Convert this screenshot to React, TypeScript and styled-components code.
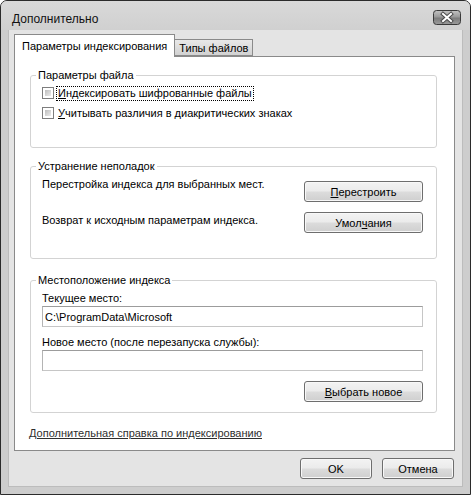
import React from 'react';
import styled, { createGlobalStyle } from 'styled-components';

const GlobalStyle = createGlobalStyle`
  html, body {
    margin: 0;
    padding: 0;
    background: #ffffff;
  }
  * {
    box-sizing: border-box;
  }
`;

const App: React.FC = () => {
  return (
    <>
      <GlobalStyle />
      <Window>
        <TitleBar>
          <Title>Дополнительно</Title>
          <CloseButton aria-label="Закрыть">
            <svg width="28" height="15" viewBox="0 0 28 15">
              <defs>
                <linearGradient id="closeFill" x1="0" y1="0" x2="0" y2="1">
                  <stop offset="0" stopColor="#c4c4c4" />
                  <stop offset="0.45" stopColor="#9a9a9a" />
                  <stop offset="0.55" stopColor="#7c7c7c" />
                  <stop offset="1" stopColor="#9c9c9c" />
                </linearGradient>
              </defs>
              <rect x="0.5" y="0.5" width="27" height="14" rx="3" fill="url(#closeFill)" stroke="#3a3a3a" />
              <path d="M10 4 L18 11 M18 4 L10 11" stroke="#4a4a4a" strokeWidth="4" strokeLinecap="square" />
              <path d="M10 4 L18 11 M18 4 L10 11" stroke="#ffffff" strokeWidth="2" strokeLinecap="square" />
            </svg>
          </CloseButton>
        </TitleBar>

        <Client>
          <TabStrip>
            <Tab active>Параметры индексирования</Tab>
            <Tab>Типы файлов</Tab>
          </TabStrip>

          <Panel>
            <Group>
              <Legend>Параметры файла</Legend>
              <CheckRow top={4}>
                <CheckBox />
                <CheckLabel focused>
                  <Mn>И</Mn>ндексировать шифрованные файлы
                </CheckLabel>
              </CheckRow>
              <CheckRow top={6}>
                <CheckBox />
                <CheckLabel>
                  <Mn>У</Mn>читывать различия в диакритических знаках
                </CheckLabel>
              </CheckRow>
            </Group>

            <Group gapTop={11} padBottom={25}>
              <Legend>Устранение неполадок</Legend>
              <ActionRow top={4}>
                <Text>Перестройка индекса для выбранных мест.</Text>
                <Button width={119} offset={4}>
                  <Mn>П</Mn>ерестроить
                </Button>
              </ActionRow>
              <ActionRow top={10}>
                <Text offset={1}>Возврат к исходным параметрам индекса.</Text>
                <Button width={119}>
                  Умол<Mn>ч</Mn>ания
                </Button>
              </ActionRow>
            </Group>

            <Group gapTop={14} padBottom={10}>
              <Legend>Местоположение индекса</Legend>
              <FieldLabel top={4}>Текущее место:</FieldLabel>
              <Input readOnly value="C:\ProgramData\Microsoft" />
              <FieldLabel top={8}>Новое место (после перезапуска службы):</FieldLabel>
              <Input readOnly value="" />
              <ButtonLine>
                <Button width={119}>
                  <Mn>В</Mn>ыбрать новое
                </Button>
              </ButtonLine>
            </Group>

            <HelpLink href="#">Дополнительная справка по индексированию</HelpLink>
          </Panel>

          <Footer>
            <Button width={72}>OK</Button>
            <Button width={72}>Отмена</Button>
          </Footer>
        </Client>
      </Window>
    </>
  );
};

export default App;

/* ----------------------- */
/* Styled Components       */
/* ----------------------- */

const uiFont = `'Liberation Sans', Arial, sans-serif`;

const Window = styled.div`
  width: 471px;
  height: 495px;
  border: 1px solid #2b2b2b;
  border-radius: 7px 7px 0 0;
  background: #cdcdcd;
  display: flex;
  flex-direction: column;
  font-family: ${uiFont};
  font-size: 11px;
  color: #000;
  overflow: hidden;
`;

const TitleBar = styled.div`
  height: 29px;
  display: flex;
  align-items: flex-start;
  justify-content: space-between;
  padding: 9px 9px 0 11px;
  background: linear-gradient(#d9d9d9, #d0d0d0);
`;

const Title = styled.span`
  font-size: 12px;
  line-height: 14px;
  color: #111;
  margin-top: 2px;
`;

const CloseButton = styled.div`
  width: 28px;
  height: 15px;
  display: flex;
`;

const Client = styled.div`
  width: 455px;
  height: 457px;
  margin: 0 7px;
  background: #e4e4e4;
  border: 1px solid #bcbcbc;
  border-top: none;
  display: flex;
  flex-direction: column;
  padding: 4px 7px 0 5px;
`;

const TabStrip = styled.div`
  display: flex;
  align-items: flex-end;
  margin-bottom: -1px;
  position: relative;
  z-index: 1;
`;

const Tab = styled.div<{ active?: boolean }>`
  border: 1px solid #8a8a8a;
  border-bottom: ${p => (p.active ? 'none' : '1px solid #8a8a8a')};
  height: ${p => (p.active ? '23px' : '17px')};
  margin-bottom: ${p => (p.active ? '0' : '1px')};
  margin-left: ${p => (p.active ? '0' : '-1px')};
  padding: ${p => (p.active ? '4px 7px 0 7px' : '0 4px 0 4px')};
  background: ${p => (p.active ? '#ffffff' : 'linear-gradient(#e8e8e8, #d2d2d2)')};
  line-height: 14px;
  font-size: 11px;
  white-space: nowrap;
  display: flex;
  align-items: ${p => (p.active ? 'flex-start' : 'center')};
`;

const Panel = styled.div`
  width: 441px;
  height: 395px;
  background: #ffffff;
  border: 1px solid #8a8a8a;
  padding: 11px 17px 0 15px;
  display: flex;
  flex-direction: column;
`;

const Group = styled.fieldset<{ gapTop?: number; padBottom?: number }>`
  margin: ${p => p.gapTop ?? 0}px 0 0 0;
  padding: 0 13px ${p => p.padBottom ?? 27}px 11px;
  border: 1px solid #d3d3d3;
  border-radius: 3px;
  min-width: 0;
`;

const Legend = styled.legend`
  margin-left: -6px;
  padding: 0 2px;
  line-height: 14px;
  font-size: 11px;
`;

const CheckRow = styled.div<{ top: number }>`
  display: flex;
  align-items: center;
  margin-top: ${p => p.top}px;
  height: 14px;
`;

const CheckBox = styled.span`
  width: 12px;
  height: 12px;
  border: 1px solid #7d7d7d;
  background: #ffffff;
  padding: 2px;
  display: inline-flex;
  flex-shrink: 0;

  &::after {
    content: '';
    flex: 1;
    background: linear-gradient(135deg, #bdbdbd, #ececec);
  }
`;

const CheckLabel = styled.span<{ focused?: boolean }>`
  margin-left: 3px;
  padding: 0 1px;
  line-height: 13px;
  outline: ${p => (p.focused ? '1px dotted #000' : 'none')};
  white-space: nowrap;
`;

const Mn = styled.span`
  text-decoration: underline;
`;

const ActionRow = styled.div<{ top: number }>`
  display: flex;
  justify-content: space-between;
  align-items: flex-start;
  margin-top: ${p => p.top}px;
`;

const Text = styled.span<{ offset?: number }>`
  line-height: 14px;
  padding-top: ${p => p.offset ?? 0}px;
`;

const Button = styled.div<{ width: number; offset?: number }>`
  width: ${p => p.width}px;
  height: 21px;
  margin-top: ${p => p.offset ?? 0}px;
  border: 1px solid #6e6e6e;
  border-radius: 3px;
  box-shadow: inset 0 0 0 1px #f8f8f8;
  background: linear-gradient(#f3f3f3 0%, #ebebeb 48%, #dcdcdc 52%, #cfcfcf 100%);
  display: flex;
  align-items: center;
  justify-content: center;
  line-height: 14px;
  white-space: nowrap;
`;

const FieldLabel = styled.div<{ top: number }>`
  margin-top: ${p => p.top}px;
  line-height: 14px;
`;

const Input = styled.input`
  display: block;
  width: 381px;
  height: 21px;
  margin-top: 1px;
  border: 1px solid #a4a4a4;
  border-color: #9c9c9c #c6c6c6 #c6c6c6 #b4b4b4;
  padding: 0 2px;
  font-family: ${uiFont};
  font-size: 11px;
  color: #000;
  background: #fff;
  outline: none;
`;

const ButtonLine = styled.div`
  display: flex;
  justify-content: flex-end;
  margin-top: 10px;
`;

const HelpLink = styled.a`
  margin-top: 13px;
  margin-left: -1px;
  align-self: flex-start;
  line-height: 14px;
  color: #2e2e2e;
  text-decoration: underline;
`;

const Footer = styled.div`
  display: flex;
  justify-content: flex-end;
  gap: 10px;
  margin-top: 7px;
  padding-right: 1px;
`;
